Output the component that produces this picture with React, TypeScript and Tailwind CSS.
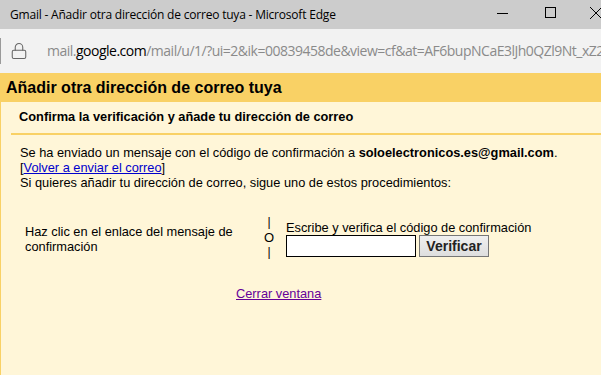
import { Lock } from 'lucide-react';

export default function App() {
  return (
    <div className="flex h-[375px] w-[601px] flex-col overflow-hidden bg-[#fff6d8] font-['Liberation_Sans',Arial,sans-serif] text-[12.8px] text-black">
      {/* title bar */}
      <div className="flex h-[29px] shrink-0 items-center bg-[#cccccc] pl-[10px] font-['Open_Sans','Noto_Sans',sans-serif] text-[12px] leading-[16px] text-black">
        <span className="min-w-0 flex-1 whitespace-nowrap tracking-[-0.2px]">
          Gmail - Añadir otra dirección de correo tuya - Microsoft Edge
        </span>
        <svg width="116" height="29" viewBox="0 0 116 29" className="shrink-0">
          <line x1="12" y1="13.5" x2="23" y2="13.5" stroke="#000" strokeWidth="1" />
          <rect x="60.5" y="7.5" width="10" height="10" fill="none" stroke="#000" strokeWidth="1" />
          <line x1="105" y1="7" x2="117" y2="19" stroke="#000" strokeWidth="1" />
          <line x1="117" y1="7" x2="105" y2="19" stroke="#000" strokeWidth="1" />
        </svg>
      </div>

      {/* address bar */}
      <div className="flex h-[44px] shrink-0 items-center bg-[#f2f2f2]">
        <div className="h-[26px] w-[1px] shrink-0 bg-[#9a9a9a]" />
        <Lock className="ml-[9px] h-[18px] w-[18px] shrink-0 text-[#666]" strokeWidth={1.4} />
        <span className="ml-[19px] whitespace-nowrap font-['Open_Sans','Noto_Sans',sans-serif] text-[14px] leading-[18px] tracking-[-0.5px] text-[#8a8a8a]">
          mail.<span className="text-black">google.com</span>/mail/u/1/?ui=2&amp;ik=00839458de&amp;view=cf&amp;at=AF6bupNCaE3lJh0QZl9Nt_xZ2VH
        </span>
      </div>

      {/* page */}
      <div className="flex-1 border-l border-[#f9d165]">
        <div className="flex h-[29px] items-center bg-[#f9d165] pl-[5px] text-[16px] font-bold leading-[18px]">
          Añadir otra dirección de correo tuya
        </div>
        <div className="ml-[10px] border-b-2 border-[#f9d165] pb-[9px] pl-[8px] pt-[7px] font-bold leading-[15px]">
          Confirma la verificación y añade tu dirección de correo
        </div>

        <div className="pl-[19px] pt-[10px] leading-[15px]">
          <div>
            Se ha enviado un mensaje con el código de confirmación a <b>soloelectronicos.es@gmail.com</b>.
          </div>
          <div>
            [<a href="#" className="text-[#0000cc] underline">Volver a enviar el correo</a>]
          </div>
          <div>Si quieres añadir tu dirección de correo, sigue uno de estos procedimientos:</div>
        </div>

        <div className="mt-[25px] flex items-start">
          <div className="ml-[24px] mt-[9px] w-[226px] leading-[15px]">
            Haz clic en el enlace del mensaje de confirmación
          </div>
          <div className="ml-[13px] flex w-[10px] flex-col items-center text-[12px] leading-[15px]">
            <span>|</span>
            <span className="text-[13px]">O</span>
            <span>|</span>
          </div>
          <div className="ml-[12px] mt-[6px]">
            <div className="leading-[14px]">Escribe y verifica el código de confirmación</div>
            <div className="flex items-center">
              <input
                type="text"
                className="h-[22px] w-[130px] border border-black bg-white px-1 text-[13px] outline-none"
              />
              <button
                type="button"
                className="ml-[3px] h-[22px] w-[70px] border border-[#767676] bg-gradient-to-b from-[#f0f0f0] to-[#dedede] text-[14px] font-bold leading-[16px] text-[#222]"
              >
                Verificar
              </button>
            </div>
          </div>
        </div>

        <div className="mt-[26px] pl-[235px] leading-[15px]">
          <a href="#" className="text-[#660099] underline">Cerrar ventana</a>
        </div>
      </div>
    </div>
  );
}
